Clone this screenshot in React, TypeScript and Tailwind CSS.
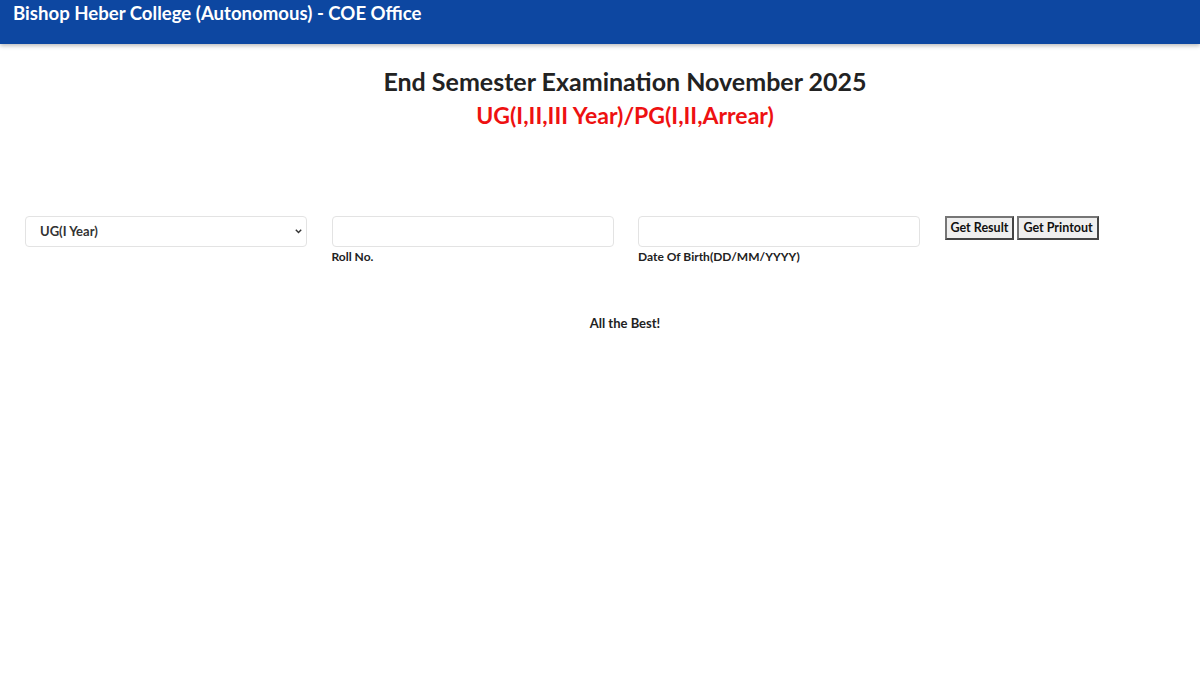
import React from "react";

export default function App() {
  return (
    <div className="min-h-[675px] bg-white text-[#212529]" style={{ fontFamily: 'Lato, "Open Sans", sans-serif' }}>
      <header className="h-[44px] bg-[#0d47a1] px-[13px] pt-[1px] shadow-[0_2px_4px_rgba(0,0,0,0.25)]">
        <h1 className="text-[18.6px] font-bold leading-[24px] text-white">
          Bishop Heber College (Autonomous) - COE Office
        </h1>
      </header>

      <div className="mt-[21px] pl-[50px] text-center">
        <h2 className="text-[25px] font-bold leading-[32px] text-[#222]">End Semester Examination November 2025</h2>
        <h3 className="mt-[4px] text-[23px] font-bold leading-[28px] text-[#ee1111]">UG(I,II,III Year)/PG(I,II,Arrear)</h3>
      </div>

      <form className="mt-[87px] grid grid-cols-[282px_282px_282px_auto] gap-x-[24.5px] pl-[25px]">
        <div>
          <div className="relative">
            <select className="h-[31px] w-full appearance-none rounded-[4px] border border-[#e3e3e3] bg-white pl-[14px] text-[13px] font-bold text-[#333] outline-none">
              <option>UG(I Year)</option>
              <option>UG(II Year)</option>
              <option>UG(III Year)</option>
              <option>PG(I Year)</option>
              <option>PG(II Year)</option>
              <option>Arrear</option>
            </select>
            <svg className="pointer-events-none absolute right-[5px] top-[13px]" width="7" height="5" viewBox="0 0 7 5">
              <path d="M0.8 0.8 L3.5 3.6 L6.2 0.8" fill="none" stroke="#333" strokeWidth="1.4" />
            </svg>
          </div>
        </div>
        <div>
          <input type="text" className="h-[31px] w-full rounded-[4px] border border-[#e3e3e3] bg-white px-2 text-[13px] outline-none" />
          <label className="mt-[1px] block text-[12px] font-bold leading-[18px] text-[#222]">Roll No.</label>
        </div>
        <div>
          <input type="text" className="h-[31px] w-full rounded-[4px] border border-[#e3e3e3] bg-white px-2 text-[13px] outline-none" />
          <label className="mt-[1px] block text-[12px] font-bold leading-[18px] text-[#222]">Date Of Birth(DD/MM/YYYY)</label>
        </div>
        <div className="flex items-start gap-[3px]">
          <button type="button" className="h-[24px] border-2 border-[#767676] border-r-[#444] border-b-[#444] bg-[#efefef] px-[4px] text-[12.5px] font-bold leading-none text-[#111]">
            Get Result
          </button>
          <button type="button" className="h-[24px] border-2 border-[#767676] border-r-[#444] border-b-[#444] bg-[#efefef] px-[4px] text-[12.5px] font-bold leading-none text-[#111]">
            Get Printout
          </button>
        </div>
      </form>

      <p className="mt-[48px] pl-[50px] text-center text-[13px] font-bold text-[#222]">All the Best!</p>
    </div>
  );
}
